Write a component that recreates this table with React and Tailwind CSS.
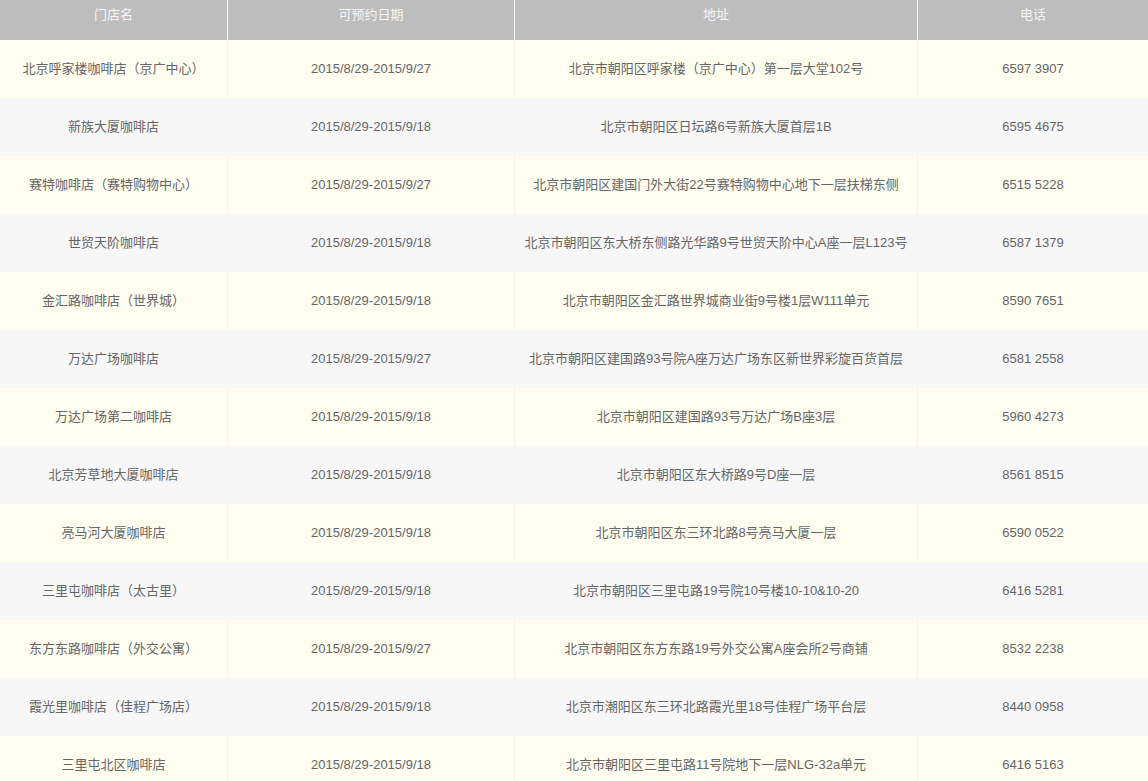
const rows = [
  ['北京呼家楼咖啡店（京广中心）', '2015/8/29-2015/9/27', '北京市朝阳区呼家楼（京广中心）第一层大堂102号', '6597 3907'],
  ['新族大厦咖啡店', '2015/8/29-2015/9/18', '北京市朝阳区日坛路6号新族大厦首层1B', '6595 4675'],
  ['赛特咖啡店（赛特购物中心）', '2015/8/29-2015/9/27', '北京市朝阳区建国门外大街22号赛特购物中心地下一层扶梯东侧', '6515 5228'],
  ['世贸天阶咖啡店', '2015/8/29-2015/9/18', '北京市朝阳区东大桥东侧路光华路9号世贸天阶中心A座一层L123号', '6587 1379'],
  ['金汇路咖啡店（世界城）', '2015/8/29-2015/9/18', '北京市朝阳区金汇路世界城商业街9号楼1层W111单元', '8590 7651'],
  ['万达广场咖啡店', '2015/8/29-2015/9/27', '北京市朝阳区建国路93号院A座万达广场东区新世界彩旋百货首层', '6581 2558'],
  ['万达广场第二咖啡店', '2015/8/29-2015/9/18', '北京市朝阳区建国路93号万达广场B座3层', '5960 4273'],
  ['北京芳草地大厦咖啡店', '2015/8/29-2015/9/18', '北京市朝阳区东大桥路9号D座一层', '8561 8515'],
  ['亮马河大厦咖啡店', '2015/8/29-2015/9/18', '北京市朝阳区东三环北路8号亮马大厦一层', '6590 0522'],
  ['三里屯咖啡店（太古里）', '2015/8/29-2015/9/18', '北京市朝阳区三里屯路19号院10号楼10-10&10-20', '6416 5281'],
  ['东方东路咖啡店（外交公寓）', '2015/8/29-2015/9/27', '北京市朝阳区东方东路19号外交公寓A座会所2号商铺', '8532 2238'],
  ['霞光里咖啡店（佳程广场店）', '2015/8/29-2015/9/18', '北京市潮阳区东三环北路霞光里18号佳程广场平台层', '8440 0958'],
  ['三里屯北区咖啡店', '2015/8/29-2015/9/18', '北京市朝阳区三里屯路11号院地下一层NLG-32a单元', '6416 5163'],
];

const font = { fontFamily: '"Liberation Sans", "Noto Sans CJK SC", sans-serif' };

export default function App() {
  return (
    <div className="w-[1148px] h-[781px] overflow-hidden bg-white text-[13px]" style={font}>
      {/* header */}
      <div className="flex h-10 bg-[#bdbdbd] text-[#f5f5f5]">
        <div className="w-[228px] border-r border-white text-center pt-[5px]">门店名</div>
        <div className="w-[287px] border-r border-white text-center pt-[5px]">可预约日期</div>
        <div className="w-[403px] border-r border-white text-center pt-[5px]">地址</div>
        <div className="flex-1 text-center pt-[5px]">电话</div>
      </div>
      {rows.map((r, i) => (
        <div
          key={i}
          className={`flex h-[58px] items-center text-[#666] ${i % 2 === 0 ? 'bg-[#fffdf0]' : 'bg-[#f7f7f8]'}`}
        >
          <div className={`w-[228px] h-full flex items-center justify-center border-r ${i % 2 === 0 ? 'border-[#f5f3e8]' : 'border-transparent'}`}>{r[0]}</div>
          <div className={`w-[287px] h-full flex items-center justify-center border-r ${i % 2 === 0 ? 'border-[#f5f3e8]' : 'border-transparent'}`}>{r[1]}</div>
          <div className={`w-[403px] h-full flex items-center justify-center border-r ${i % 2 === 0 ? 'border-[#f5f3e8]' : 'border-transparent'}`}>{r[2]}</div>
          <div className="flex-1 h-full flex items-center justify-center">{r[3]}</div>
        </div>
      ))}
    </div>
  );
}
